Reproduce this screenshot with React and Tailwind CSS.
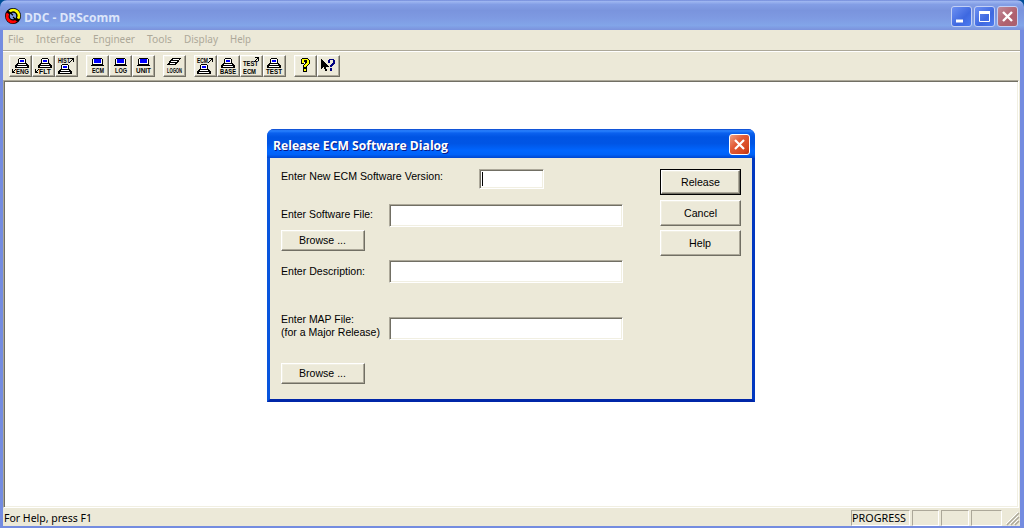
import React from 'react';

const BEVEL = 'border border-t-white border-l-white border-r-[#716f64] border-b-[#716f64]';
const INNER = 'shadow-[inset_-1px_-1px_0_#aca899,inset_1px_1px_0_#f1efe2]';

const MENUS = [
    ['File', 'w-[28px]', 16],
    ['Interface', 'w-[57px]', 45],
    ['Engineer', 'w-[54px]', 42],
    ['Tools', 'w-[37px]', 25],
    ['Display', 'w-[46px]', 34],
    ['Help', 'w-[34px]', 21],
];

// single line of text held to an exact advance width
function Label({ children, width, size = 11, className = '', fill = '#000', bold, font = 'Liberation Sans', shadow }) {
    const props = { textLength: width, lengthAdjust: 'spacingAndGlyphs', fontSize: size, fontWeight: bold ? 700 : 400, fontFamily: `"${font}", sans-serif` };
    return (
        <svg width={width + 1} height="15" className={`block shrink-0 overflow-visible ${className}`}>
            {shadow && <text x="1" y="12" fill={shadow} aria-hidden="true" {...props}>{children}</text>}
            <text x="0" y="11" fill={fill} {...props}>{children}</text>
        </svg>
    );
}

function Tiny({ x, y, w, size = 7.5, children }) {
    return (
        <text x={x} y={y} fontSize={size} fontWeight="700" fontFamily='"Liberation Sans", sans-serif' textLength={w} lengthAdjust="spacingAndGlyphs">
            {children}
        </text>
    );
}

function Engine({ x = 9, y = 3 }) {
    return (
        <g transform={`translate(${x} ${y})`}>
            <path d="M1 0h6v1h1v4h1v1h1v1h1v3H-3V7h1V6h1V5h1V1h1z" />
            <path d="M1 1h6v4H1zM0 6h8v1H0zM-1 8h10v1H-1z" fill="#fff" />
            <path d="M2 2h4v2H2z" fill="#00f" />
        </g>
    );
}

function Monitor() {
    return (
        <g>
            <path d="M7 3h9v1h1v6h1v1H5v-1h1V4h1z" />
            <path d="M7 4h9v5H7z" fill="#fff" />
            <path d="M8 4h7v4H8z" fill="#00f" />
        </g>
    );
}

const ArrowOut = ({ x, y }) => <path transform={`translate(${x} ${y})`} d="M1 0h4v4h-1V2h-1v1h-1v1h-1v1H0V4h1V3h1V2h1V1H1z" />;
const ArrowIn = () => <path d="M3 14h1v2h1v-1h1v-1h1v1h-1v1h-1v1h1v1H3z" />;

const GROUPS = [
    [
        <><Engine /><ArrowIn /><Tiny x={7} y={19} w={13}>ENG</Tiny></>,
        <><Engine /><ArrowIn /><Tiny x={7} y={19} w={12}>FLT</Tiny></>,
        <><Tiny x={3} y={8} w={12}>HIST</Tiny><ArrowOut x={14} y={3} /><Engine x={6} y={9} /></>,
    ],
    [
        <><Monitor /><Tiny x={6} y={18} w={12}>ECM</Tiny></>,
        <><Monitor /><Tiny x={6} y={18} w={12}>LOG</Tiny></>,
        <><Monitor /><Tiny x={4} y={18} w={15}>UNIT</Tiny></>,
    ],
    [
        <>
            <path d="M9 3h9v1h-1v1h-1v2h-1v1h-1v1h-1v1H4V9h1V8h1V6h1V5h1V4h1z" />
            <path d="M10 4h6v1h-6zM8 6h6v1H8zM7 8h5v1H7z" fill="#fff" />
            <Tiny x={4} y={18} w={15}>LOGON</Tiny>
        </>,
    ],
    [
        <><Tiny x={3} y={8} w={11}>ECM</Tiny><ArrowOut x={14} y={3} /><Engine x={6} y={9} /></>,
        <><Engine x={7} /><Tiny x={3} y={19} w={16}>BASE</Tiny></>,
        <><Tiny x={3} y={11} w={15} size={6.5}>TEST</Tiny><ArrowOut x={14} y={2} /><Tiny x={3} y={19} w={13} size={6.5}>ECM</Tiny></>,
        <><Engine x={7} /><Tiny x={3} y={19} w={16}>TEST</Tiny></>,
    ],
    [
        <>
            <path d="M8 3h6v1h1v1h1v4h-1v1h-1v1h-1v2H9v-3h1V9h1V7h-1v2H7V4h1zM9 13h4v4H9z" />
            <path d="M8 4h6v1h1v4h-1v1h-1v1h-1v1h-2v-2h1V9h1V8h1V5h-3v3H8zM10 14h2v2h-2z" fill="#ff0" />
        </>,
        <>
            <path d="M4 4h1v1h1v1h1v1h1v1h1v1h1v1h1v1h1v1H9v2h1v2H8v-2H7v-2H6v1H5v1H4z" />
            <path d="M12 4h5v1h1v4h-1v1h-1v1h-1v1h-2v-2h1V9h1V8h1V5h-3v3h-2V5h1zM13 13h2v3h-2z" fill="#000080" />
        </>,
    ],
];

function ToolButton({ children }) {
    return (
        <button className={`h-[22px] w-[23px] bg-[#ece9d8] ${BEVEL} ${INNER}`}>
            <svg width="23" height="22" className="-m-px block overflow-visible" shapeRendering="crispEdges">{children}</svg>
        </button>
    );
}

function CaptionButton({ className, children }) {
    return (
        <button className={`flex h-[21px] w-[21px] items-center justify-center rounded-[3px] border ${className}`}>
            <svg width="19" height="19" className="shrink-0" fill="none" stroke="#fff">{children}</svg>
        </button>
    );
}

function Field({ className, caret }) {
    return (
        <div className={`shrink-0 border border-t-[#aca899] border-l-[#aca899] border-r-white border-b-white bg-white p-[2px] shadow-[inset_1px_1px_0_#716f64,inset_-1px_-1px_0_#f1efe2] ${className}`}>
            {caret && <div className="h-[14px] w-px bg-black" />}
        </div>
    );
}

function PushButton({ className = 'h-[26px] w-[81px]', text, width, primary }) {
    const button = (
        <button className={`flex items-center justify-center bg-[#ece9d8] ${BEVEL} ${INNER} ${primary ? 'h-[24px] w-[79px]' : className}`}>
            <Label width={width}>{text}</Label>
        </button>
    );
    return primary ? <div className="h-[26px] w-[81px] border border-black">{button}</div> : button;
}

function ReleaseDialog() {
    return (
        <div className="absolute top-[129px] left-[267px] flex h-[273px] w-[488px] flex-col rounded-t-[7px] bg-[#0842d6]">
            <div className="flex h-[29px] items-center justify-between rounded-t-[7px] bg-[linear-gradient(180deg,#0842c8_0%,#2a83ff_6%,#0b61ee_14%,#0054e3_28%,#0055e5_50%,#0066ff_75%,#0062f8_88%,#0046cf_100%)] pt-[2px] pr-[5px] pl-[6px]">
                <Label width={175} size={13} bold font="Open Sans" fill="#fff" shadow="#0a1883" className="relative top-[2px]">
                    Release ECM Software Dialog
                </Label>
                <CaptionButton className="border-white bg-[linear-gradient(135deg,#f0a184_0%,#e25c37_40%,#d5461f_80%,#b53010_100%)]">
                    <path d="M5 5l9 9M14 5l-9 9" strokeWidth="2.2" />
                </CaptionButton>
            </div>
            <div className="flex flex-1 border-r-[3px] border-b-[3px] border-l-[3px] border-r-[#0138c0] border-b-[#0026a8] border-l-[#0855dd] bg-[#ece9d8] pt-[11px] pl-[11px]">
                <div className="w-[379px]">
                    <div className="flex h-[20px]">
                        <Label width={162} className="mr-[35px]">Enter New ECM Software Version:</Label>
                        <Field className="h-[20px] w-[65px]" caret />
                    </div>
                    <div className="mt-[15px] flex h-[23px] items-center">
                        <div className="w-[108px]"><Label width={92} className="-mt-[2px]">Enter Software File:</Label></div>
                        <Field className="h-[23px] w-[234px]" />
                    </div>
                    <PushButton className="mt-[3px] h-[21px] w-[84px]" text="Browse ..." width={47} />
                    <div className="mt-[9px] flex h-[23px] items-center">
                        <div className="w-[108px]"><Label width={84} className="-mt-px">Enter Description:</Label></div>
                        <Field className="h-[23px] w-[234px]" />
                    </div>
                    <div className="mt-[34px] flex h-[23px]">
                        <div className="-mt-[5px] w-[108px]">
                            <Label width={73} className="-mb-[2px]">Enter MAP File:</Label>
                            <Label width={99}>(for a Major Release)</Label>
                        </div>
                        <Field className="h-[23px] w-[234px]" />
                    </div>
                    <PushButton className="mt-[23px] h-[21px] w-[84px]" text="Browse ..." width={47} />
                </div>
                <div className="flex flex-col">
                    <PushButton text="Release" width={39} primary />
                    <PushButton className="mt-[5px] h-[26px] w-[81px]" text="Cancel" width={33} />
                    <PushButton className="mt-[4px] h-[26px] w-[81px]" text="Help" width={22} />
                </div>
            </div>
        </div>
    );
}

function StatusPane({ className, children }) {
    return <div className={`h-[16px] border border-t-[#aca899] border-l-[#aca899] border-r-white border-b-white ${className}`}>{children}</div>;
}

export default function App() {
    return (
        <div className="relative flex h-[528px] w-[1024px] flex-col overflow-hidden bg-[#004e98]">
            <div className="flex h-[30px] shrink-0 items-center rounded-t-[7px] bg-[linear-gradient(180deg,#6f87d8_0%,#9db5f0_5%,#839ee5_15%,#7a94dd_35%,#7e9ae2_60%,#82a5e8_85%,#7b92dc_100%)] pt-[3px] pr-[6px] pl-[5px]">
                <svg width="17" height="17" className="mr-[2px]" fill="none">
                    <circle cx="8" cy="8" r="5.6" stroke="#000" strokeWidth="4.8" />
                    <path d="M4.5 3.6a5.6 5.6 0 0 1 8.6 7" stroke="#ff0" strokeWidth="2.8" />
                    <path d="M3 5.4a5.6 5.6 0 0 0 8.5 7.1" stroke="#f00" strokeWidth="3" />
                    <path d="M4.5 4L8 7.2M8 9l4 4" stroke="#000" strokeWidth="1.2" />
                </svg>
                <Label width={96} size={13} bold font="Open Sans" fill="#dce5fa" className="relative top-[2px]">DDC - DRScomm</Label>
                <div className="ml-auto flex gap-[2px]">
                    <CaptionButton className="border-[#c3d0f5] bg-[linear-gradient(135deg,#6e91f2,#3e68e0_60%,#4d7cf0)]"><path d="M4 14h7" strokeWidth="3" /></CaptionButton>
                    <CaptionButton className="border-[#c3d0f5] bg-[linear-gradient(135deg,#6e91f2,#3e68e0_60%,#4d7cf0)]"><path d="M4.5 5v9.5h10V5" /><path d="M4 5.5h11" strokeWidth="3" /></CaptionButton>
                    <CaptionButton className="border-[#c3d0f5] bg-[linear-gradient(135deg,#c08a98,#b0616f_60%,#a9606f)]"><path d="M5 5l9 9M14 5l-9 9" strokeWidth="2.4" /></CaptionButton>
                </div>
            </div>

            <div className="flex min-h-0 flex-1 flex-col border-r-[4px] border-b-[2px] border-l-[3px] border-[#748ce0] bg-[#ece9d8]">
                <nav className="flex h-[20px] items-start pt-[2px] pl-[5px]">
                    {MENUS.map(([name, cell, width]) => (
                        <div key={name} className={cell}><Label width={width} size={11.5} font="Noto Sans" fill="#aca899">{name}</Label></div>
                    ))}
                </nav>
                <div className="h-[2px] border-t border-b border-t-[#aca899] border-b-white" />
                <div className="flex h-[28px] gap-[8px] pt-[3px] pl-[6px]">
                    {GROUPS.map((group, i) => (
                        <div key={i} className="flex">
                            {group.map((icon, j) => <ToolButton key={j}>{icon}</ToolButton>)}
                        </div>
                    ))}
                </div>
                <div className="mr-px flex-1 border border-t-[#aca899] border-l-[#aca899] border-r-white border-b-white bg-white shadow-[inset_1px_1px_0_#716f64,inset_-1px_-1px_0_#f1efe2]" />
                <div className="flex h-[18px] items-center gap-[2px] pt-px pl-[1px]">
                    <Label width={88} font="Noto Sans" className="mt-px mr-auto">For Help, press F1</Label>
                    <StatusPane className="w-[59px]"><Label width={54} font="Noto Sans">PROGRESS</Label></StatusPane>
                    <StatusPane className="w-[27px]" />
                    <StatusPane className="w-[28px]" />
                    <StatusPane className="mr-[2px] w-[31px]" />
                    <svg width="14" height="14" className="mt-[3px]" strokeWidth="1.5">
                        <path d="M1 13L13 1M5 13l8-8M9 13l4-4" stroke="#aca899" />
                        <path d="M0 12L12 0M4 12l8-8M8 12l4-4" stroke="#fff" strokeWidth="1" />
                    </svg>
                </div>
            </div>
            <ReleaseDialog />
        </div>
    );
}
